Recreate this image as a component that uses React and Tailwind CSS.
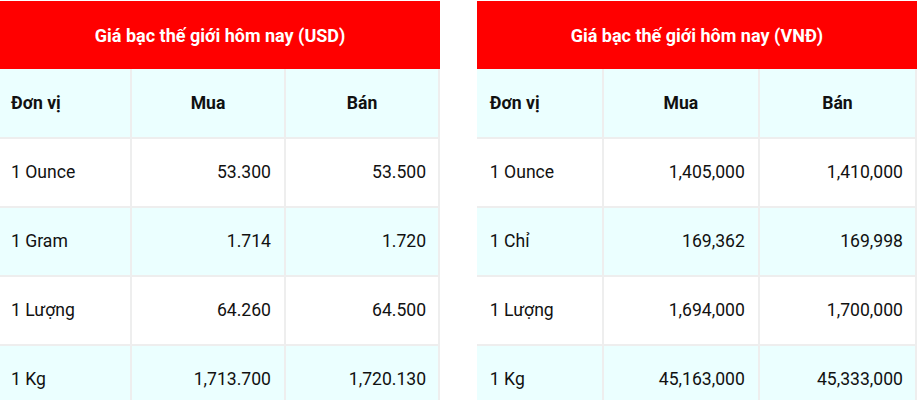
const usd = [
  ["1 Ounce", "53.300", "53.500"],
  ["1 Gram", "1.714", "1.720"],
  ["1 Lượng", "64.260", "64.500"],
  ["1 Kg", "1,713.700", "1,720.130"],
];

const vnd = [
  ["1 Ounce", "1,405,000", "1,410,000"],
  ["1 Chỉ", "169,362", "169,998"],
  ["1 Lượng", "1,694,000", "1,700,000"],
  ["1 Kg", "45,163,000", "45,333,000"],
];

const PriceTable = ({ title, rows, cols, pad }) => {
  return (
    <div className="w-[48%] flex flex-col">
      <div className="shrink-0 h-[68px] mt-px bg-[#ff0000] flex items-center justify-center text-white font-bold text-[18px]">
        {title}
      </div>
      <div className={`shrink-0 grid ${cols} h-[70px] bg-[#ebffff] font-bold text-[#111]`}>
        <div className={`flex items-center ${pad} border-r-2 border-b-2 border-[#eeeeee]`}>Đơn vị</div>
        <div className="flex items-center justify-center border-r-2 border-b-2 border-[#eeeeee]">Mua</div>
        <div className="flex items-center justify-center border-r-2 border-b-2 border-[#eeeeee]">Bán</div>
      </div>
      {rows.map(([unit, buy, sell], i) => (
        <div
          key={i}
          className={`shrink-0 grid ${cols} h-[69px] text-[#111] ${i % 2 === 1 ? "bg-[#ebffff]" : "bg-white"}`}
        >
          <div className={`flex items-center ${pad} border-r-2 border-b-2 border-[#eeeeee]`}>{unit}</div>
          <div className="flex items-center justify-end pr-[13px] border-r-2 border-b-2 border-[#eeeeee]">{buy}</div>
          <div className="flex items-center justify-end pr-[12px] border-r-2 border-b-2 border-[#eeeeee]">{sell}</div>
        </div>
      ))}
    </div>
  );
};

const App = () => {
  return (
    <div className="w-[917px] h-[400px] overflow-hidden bg-white flex justify-between font-['Roboto',sans-serif] text-[17.6px]">
      <PriceTable title="Giá bạc thế giới hôm nay (USD)" rows={usd} cols="grid-cols-[132px_154px_1fr]" pad="pl-[11px]" />
      <PriceTable title="Giá bạc thế giới hôm nay (VNĐ)" rows={vnd} cols="grid-cols-[127px_156px_1fr]" pad="pl-[13px]" />
    </div>
  );
};

export default App;
